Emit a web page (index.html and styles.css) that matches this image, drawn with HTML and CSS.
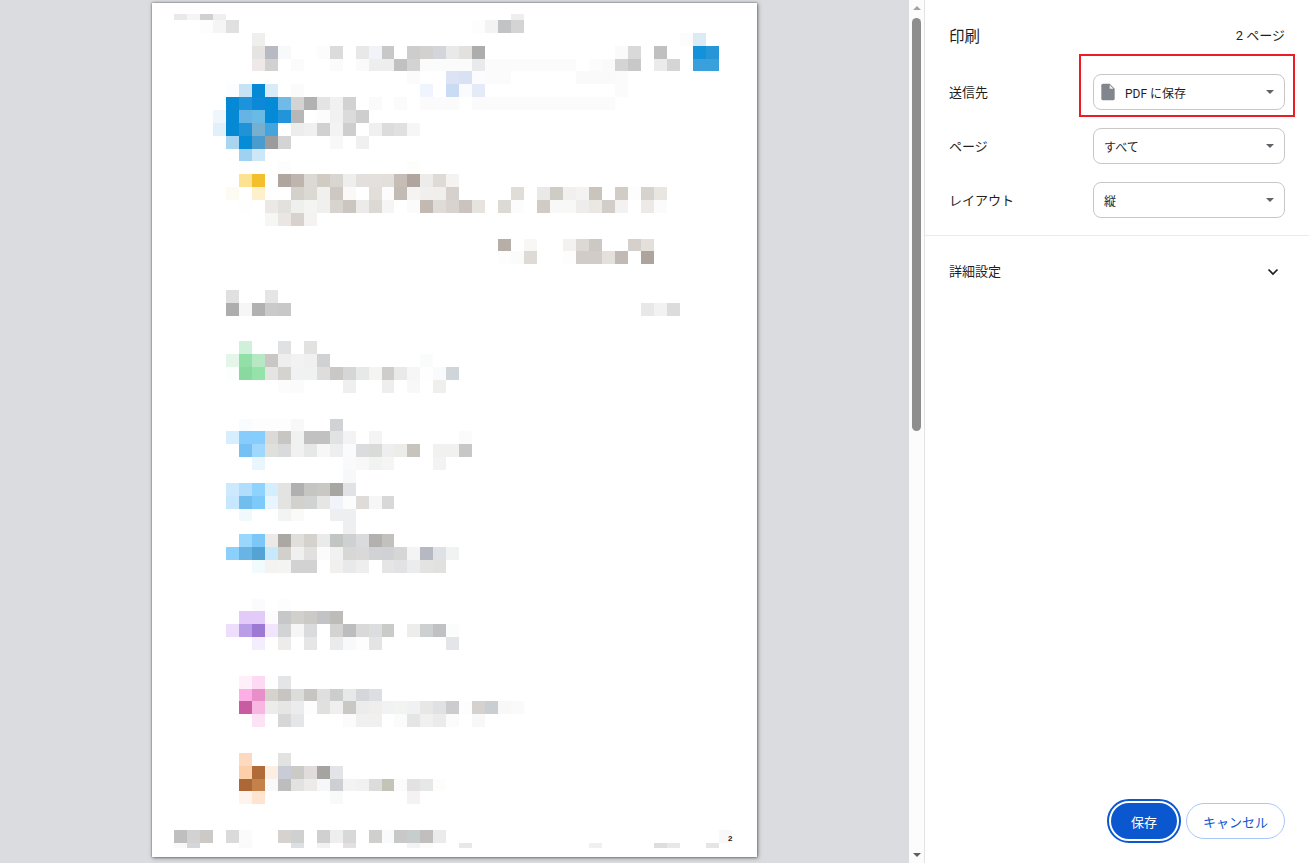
FILE: index.html
```html
<!DOCTYPE html>
<html lang="ja">
<head>
<meta charset="utf-8">
<title>印刷</title>
<link rel="stylesheet" href="styles.css">
</head>
<body>
<main class="preview">
<div class="sheet">
<svg class="mosaic" width="605" height="854" viewBox="0 0 605 854" aria-hidden="true">
<g transform="translate(22 17) scale(12.97 12.857)">
<g class="cap-top">
<rect x="0" y="-.467" fill="#e9e9e9"/><rect x="1" y="-.467" fill="#f5f5f6"/><rect x="2" y="-.467" fill="#d0d0d0"/><rect x="3" y="-.467" fill="#efefef"/><rect x="26" y="-.467" fill="#eee"/>
</g>
<g class="cells">
<rect x="2" y="0" fill="#fdfdfd"/><rect x="3" y="0" fill="#f5f5f5"/><rect x="4" y="0" fill="#e0e0e0"/><rect x="23" y="0" fill="#fdfdfd"/><rect x="24" y="0" fill="#f3f3f3"/><rect x="25" y="0" fill="#c2c3c5"/><rect x="26" y="0" fill="#d4d4d4"/>
<rect x="6" y="1" fill="#efefed"/><rect x="39" y="1" fill="#fcfcfc"/><rect x="40" y="1" fill="#daebf5"/>
<rect x="6" y="2" fill="#e5e4e2"/><rect x="7" y="2" fill="#b7bac3"/><rect x="8" y="2" fill="#f8f9fb"/><rect x="11" y="2" fill="#fbfcfb"/><rect x="12" y="2" fill="#dadbda"/><rect x="14" y="2" fill="#e8e8e9"/><rect x="15" y="2" fill="#f2f3f8"/><rect x="16" y="2" fill="#c8c8c8"/><rect x="18" y="2" fill="#cdcdcd"/><rect x="19" y="2" fill="#d2d1cf"/><rect x="20" y="2" fill="#d3d5db"/><rect x="21" y="2" fill="#e9e9e9"/><rect x="22" y="2" fill="#e2e1de"/><rect x="23" y="2" fill="#adadad"/><rect x="34" y="2" fill="#fafafa"/><rect x="35" y="2" fill="#d9d9d9"/><rect x="37" y="2" fill="#c0c0c0"/><rect x="40" y="2" fill="#1392d9"/><rect x="41" y="2" fill="#2796d9"/>
<rect x="6" y="3" fill="#eee9e8"/><rect x="7" y="3" fill="#d0d1d0"/><rect x="9" y="3" fill="#fbfbfb"/><rect x="12" y="3" fill="#fbfbfb"/><rect x="14" y="3" fill="#fafafa"/><rect x="15" y="3" fill="#eee"/><rect x="16" y="3" fill="#eee"/><rect x="17" y="3" fill="#c1c1c1"/><rect x="18" y="3" fill="#d3d3d3"/><rect x="19" y="3" fill="#fbfbfb"/><rect x="20" y="3" fill="#fbfbfb"/><rect x="21" y="3" fill="#fbfbfb"/><rect x="22" y="3" fill="#fbfbfb"/><rect x="23" y="3" fill="#e9eaec"/><rect x="24" y="3" fill="#fbfbfb"/><rect x="25" y="3" fill="#fbfbfb"/><rect x="26" y="3" fill="#fbfbfb"/><rect x="27" y="3" fill="#fbfbfb"/><rect x="28" y="3" fill="#fbfbfb"/><rect x="29" y="3" fill="#fbfbfb"/><rect x="30" y="3" fill="#fbfbfb"/><rect x="32" y="3" fill="#fcfcfc"/><rect x="33" y="3" fill="#fafafa"/><rect x="34" y="3" fill="#d4d4d4"/><rect x="35" y="3" fill="#c8c8c8"/><rect x="37" y="3" fill="#ebebeb"/><rect x="38" y="3" fill="#d5d5d5"/><rect x="40" y="3" fill="#3a9fda"/><rect x="41" y="3" fill="#38a0da"/>
<rect x="18" y="4" fill="#fbfbfd"/><rect x="21" y="4" fill="#dce3f5"/><rect x="22" y="4" fill="#d9e2f5"/><rect x="23" y="4" fill="#fcfcfe"/><rect x="24" y="4" fill="#fbfbfb"/><rect x="25" y="4" fill="#fbfbfb"/><rect x="31" y="4" fill="#fafafa"/><rect x="32" y="4" fill="#fafafa"/><rect x="33" y="4" fill="#fafafa"/><rect x="34" y="4" fill="#fbfbfb"/>
<rect x="4" y="5" fill="#fcfdfe"/><rect x="5" y="5" fill="#c6e2f3"/><rect x="6" y="5" fill="#0689d5"/><rect x="7" y="5" fill="#d8ebf6"/><rect x="9" y="5" fill="#fbfbfb"/><rect x="19" y="5" fill="#f0f4fd"/><rect x="21" y="5" fill="#c9dcf3"/><rect x="22" y="5" fill="#f9fbfe"/><rect x="23" y="5" fill="#e4eaf8"/><rect x="34" y="5" fill="#fbfbfb"/>
<rect x="4" y="6" fill="#0689d4"/><rect x="5" y="6" fill="#1c93da"/><rect x="6" y="6" fill="#0b89d8"/><rect x="7" y="6" fill="#048ad6"/><rect x="8" y="6" fill="#6fbae6"/><rect x="9" y="6" fill="#d3d3d3"/><rect x="10" y="6" fill="#b1b1b1"/><rect x="11" y="6" fill="#e4e4e4"/><rect x="12" y="6" fill="#f1f1f1"/><rect x="13" y="6" fill="#d2d2d2"/><rect x="15" y="6" fill="#fafafa"/><rect x="17" y="6" fill="#fbfbfb"/><rect x="19" y="6" fill="#fbfbfb"/><rect x="20" y="6" fill="#fbfbfb"/><rect x="21" y="6" fill="#fbfbfb"/><rect x="23" y="6" fill="#fbfbfb"/><rect x="24" y="6" fill="#fbfbfb"/><rect x="25" y="6" fill="#fbfbfb"/><rect x="26" y="6" fill="#fbfbfb"/><rect x="27" y="6" fill="#fbfbfb"/><rect x="28" y="6" fill="#fbfbfb"/><rect x="29" y="6" fill="#fbfbfb"/><rect x="30" y="6" fill="#fbfbfb"/><rect x="31" y="6" fill="#fbfbfb"/><rect x="32" y="6" fill="#fbfbfb"/><rect x="33" y="6" fill="#fbfbfb"/>
<rect x="3" y="7" fill="#eff7fc"/><rect x="4" y="7" fill="#0689d4"/><rect x="5" y="7" fill="#66b4e6"/><rect x="6" y="7" fill="#6abae6"/><rect x="7" y="7" fill="#048ad6"/><rect x="8" y="7" fill="#2295da"/><rect x="9" y="7" fill="#b7b7b7"/><rect x="11" y="7" fill="#fcfcfc"/><rect x="12" y="7" fill="#f1f1f1"/><rect x="13" y="7" fill="#dbdbdb"/><rect x="14" y="7" fill="#cecece"/>
<rect x="3" y="8" fill="#e2f1f9"/><rect x="4" y="8" fill="#0689d4"/><rect x="5" y="8" fill="#1f92d8"/><rect x="6" y="8" fill="#77afd1"/><rect x="7" y="8" fill="#44a5de"/><rect x="9" y="8" fill="#ededed"/><rect x="10" y="8" fill="#f0f0f0"/><rect x="11" y="8" fill="#d1d1d1"/><rect x="12" y="8" fill="#f3f3f3"/><rect x="13" y="8" fill="#cdcecd"/><rect x="15" y="8" fill="#f0f0f0"/><rect x="16" y="8" fill="#dcdcdc"/><rect x="17" y="8" fill="#e0e0e0"/><rect x="18" y="8" fill="#f6f6f6"/>
<rect x="4" y="9" fill="#a8d6f0"/><rect x="5" y="9" fill="#068bd6"/><rect x="6" y="9" fill="#4a9ccf"/><rect x="7" y="9" fill="#9b9b9b"/><rect x="8" y="9" fill="#d4d4d4"/><rect x="12" y="9" fill="#f8f8f8"/><rect x="14" y="9" fill="#f0f0f0"/>
<rect x="5" y="10" fill="#9fd1f0"/><rect x="6" y="10" fill="#cce7f7"/>
<rect x="5" y="11" fill="#fefefe"/><rect x="8" y="11" fill="#fdfdfd"/><rect x="18" y="11" fill="#fdfdfb"/>
<rect x="5" y="12" fill="#fce291"/><rect x="6" y="12" fill="#f3bf2c"/><rect x="8" y="12" fill="#afa69f"/><rect x="9" y="12" fill="#bdb5ae"/><rect x="10" y="12" fill="#dcd9d4"/><rect x="11" y="12" fill="#d0ccc4"/><rect x="12" y="12" fill="#d9d5d0"/><rect x="13" y="12" fill="#eeeeec"/><rect x="14" y="12" fill="#e3dfdc"/><rect x="15" y="12" fill="#e4e1dd"/><rect x="16" y="12" fill="#e3e0dc"/><rect x="17" y="12" fill="#c5bdb6"/><rect x="18" y="12" fill="#afa59e"/><rect x="19" y="12" fill="#edecea"/><rect x="20" y="12" fill="#dedbd7"/><rect x="21" y="12" fill="#f4f3f1"/>
<rect x="4" y="13" fill="#fefbf3"/><rect x="6" y="13" fill="#fdf0cb"/><rect x="9" y="13" fill="#d4d0ca"/><rect x="10" y="13" fill="#dbd9d2"/><rect x="11" y="13" fill="#f0f0ee"/><rect x="12" y="13" fill="#cdc8c2"/><rect x="13" y="13" fill="#faf9f7"/><rect x="15" y="13" fill="#e2dfdb"/><rect x="16" y="13" fill="#fcfcfc"/><rect x="17" y="13" fill="#c2bbb4"/><rect x="18" y="13" fill="#f5f4f2"/><rect x="19" y="13" fill="#f0efed"/><rect x="20" y="13" fill="#f0efed"/><rect x="21" y="13" fill="#d6d1cc"/><rect x="26" y="13" fill="#e0ddd9"/><rect x="28" y="13" fill="#eae9e7"/><rect x="29" y="13" fill="#cfcbc5"/><rect x="30" y="13" fill="#f1f0ee"/><rect x="31" y="13" fill="#f4f3f1"/><rect x="32" y="13" fill="#c9c5bd"/><rect x="34" y="13" fill="#d1ccc6"/><rect x="35" y="13" fill="#fdfdfd"/><rect x="36" y="13" fill="#d6d2cd"/><rect x="37" y="13" fill="#e9e6e2"/>
<rect x="5" y="14" fill="#fefefe"/><rect x="7" y="14" fill="#ece8e6"/><rect x="8" y="14" fill="#e3e1dd"/><rect x="9" y="14" fill="#efefed"/><rect x="10" y="14" fill="#f4f4f2"/><rect x="11" y="14" fill="#f0f0ee"/><rect x="12" y="14" fill="#d7d3cf"/><rect x="13" y="14" fill="#cbc6bf"/><rect x="14" y="14" fill="#ecebe9"/><rect x="15" y="14" fill="#dcd8d4"/><rect x="16" y="14" fill="#f6f4f4"/><rect x="18" y="14" fill="#fbfbfb"/><rect x="19" y="14" fill="#c2b9b3"/><rect x="20" y="14" fill="#dfdbd7"/><rect x="21" y="14" fill="#d8d3cf"/><rect x="22" y="14" fill="#cbc4be"/><rect x="23" y="14" fill="#e7e3df"/><rect x="25" y="14" fill="#ddd9d5"/><rect x="26" y="14" fill="#fcfcfd"/><rect x="28" y="14" fill="#d0cbc5"/><rect x="29" y="14" fill="#f8f8f6"/><rect x="30" y="14" fill="#f8f8f6"/><rect x="31" y="14" fill="#eeedeb"/><rect x="32" y="14" fill="#ebe7e3"/><rect x="33" y="14" fill="#d2cdc8"/><rect x="34" y="14" fill="#f3f2f0"/><rect x="36" y="14" fill="#ede9e7"/><rect x="37" y="14" fill="#fcfbfb"/>
<rect x="7" y="15" fill="#f6f6f4"/><rect x="8" y="15" fill="#e9e6e3"/><rect x="9" y="15" fill="#d7d2ce"/><rect x="10" y="15" fill="#f4f3f1"/>
<rect x="25" y="17" fill="#b8aea8"/><rect x="27" y="17" fill="#f9f7f5"/><rect x="30" y="17" fill="#f3f2f0"/><rect x="31" y="17" fill="#dcd8d4"/><rect x="32" y="17" fill="#ccc8c3"/><rect x="35" y="17" fill="#d5d0cc"/><rect x="36" y="17" fill="#e3dfdb"/>
<rect x="25" y="18" fill="#fdfdfd"/><rect x="26" y="18" fill="#fbfbfb"/><rect x="27" y="18" fill="#dedad6"/><rect x="30" y="18" fill="#fdfdfd"/><rect x="31" y="18" fill="#d1ccc7"/><rect x="32" y="18" fill="#d1ccc8"/><rect x="33" y="18" fill="#e4e0dc"/><rect x="34" y="18" fill="#c1b9b3"/><rect x="36" y="18" fill="#aea49e"/>
<rect x="4" y="21" fill="#e0e0e0"/><rect x="7" y="21" fill="#e5e5e5"/>
<rect x="4" y="22" fill="#adadad"/><rect x="5" y="22" fill="#f6f6f6"/><rect x="6" y="22" fill="#b1b1b1"/><rect x="7" y="22" fill="#cacaca"/><rect x="8" y="22" fill="#c8c8c8"/><rect x="36" y="22" fill="#e8e8e8"/><rect x="37" y="22" fill="#f2f2f2"/><rect x="38" y="22" fill="#dcdcdc"/>
<rect x="5" y="25" fill="#cff0da"/><rect x="8" y="25" fill="#e0e1e2"/><rect x="10" y="25" fill="#e2e2e0"/>
<rect x="4" y="26" fill="#e4f6ea"/><rect x="5" y="26" fill="#92dfa8"/><rect x="6" y="26" fill="#b6e8c3"/><rect x="7" y="26" fill="#c9c6c3"/><rect x="8" y="26" fill="#eee"/><rect x="9" y="26" fill="#f2f2f2"/><rect x="10" y="26" fill="#f0f0f0"/><rect x="11" y="26" fill="#d0d1d3"/><rect x="19" y="26" fill="#fafcfb"/>
<rect x="4" y="27" fill="#fbfefc"/><rect x="5" y="27" fill="#89d9a0"/><rect x="6" y="27" fill="#95e2ab"/><rect x="7" y="27" fill="#e4e4e2"/><rect x="8" y="27" fill="#d4d3d0"/><rect x="9" y="27" fill="#f0f1f2"/><rect x="10" y="27" fill="#f0f1f1"/><rect x="11" y="27" fill="#dedddb"/><rect x="12" y="27" fill="#c9c8c6"/><rect x="13" y="27" fill="#d5d6d5"/><rect x="14" y="27" fill="#e7e8e8"/><rect x="15" y="27" fill="#f4f4f3"/><rect x="16" y="27" fill="#cfcdcb"/><rect x="17" y="27" fill="#e9e9e9"/><rect x="18" y="27" fill="#f6f6f6"/><rect x="19" y="27" fill="#fefefe"/><rect x="20" y="27" fill="#f9fafb"/><rect x="21" y="27" fill="#d0d5d9"/>
<rect x="8" y="28" fill="#fbfcfb"/><rect x="9" y="28" fill="#fbfbfb"/><rect x="13" y="28" fill="#efefef"/><rect x="16" y="28" fill="#eee"/><rect x="18" y="28" fill="#f8f8f8"/><rect x="20" y="28" fill="#efefed"/>
<rect x="5" y="31" fill="#f9fcff"/><rect x="6" y="31" fill="#fdfdfd"/><rect x="7" y="31" fill="#fdfdfd"/><rect x="8" y="31" fill="#fdfdfd"/><rect x="9" y="31" fill="#f8f8f8"/><rect x="12" y="31" fill="#d1d2d6"/>
<rect x="4" y="32" fill="#d6eefd"/><rect x="5" y="32" fill="#88cbfd"/><rect x="6" y="32" fill="#85cdfd"/><rect x="7" y="32" fill="#dbdad8"/><rect x="8" y="32" fill="#c8c6c3"/><rect x="9" y="32" fill="#f0f2f1"/><rect x="10" y="32" fill="#c1c1c1"/><rect x="11" y="32" fill="#c1c1c1"/><rect x="12" y="32" fill="#e1e2e4"/><rect x="13" y="32" fill="#f3f3f3"/><rect x="15" y="32" fill="#f4f4f4"/><rect x="22" y="32" fill="#fbfbfb"/>
<rect x="5" y="33" fill="#75c1f4"/><rect x="6" y="33" fill="#9fd7fd"/><rect x="7" y="33" fill="#dfdfdb"/><rect x="8" y="33" fill="#d9dadc"/><rect x="9" y="33" fill="#f1f1f1"/><rect x="10" y="33" fill="#e6e8e8"/><rect x="11" y="33" fill="#f7f7f7"/><rect x="12" y="33" fill="#edefef"/><rect x="13" y="33" fill="#f9fbfd"/><rect x="14" y="33" fill="#dbdcde"/><rect x="15" y="33" fill="#dadad8"/><rect x="16" y="33" fill="#eee"/><rect x="17" y="33" fill="#ecece9"/><rect x="18" y="33" fill="#c6c4bc"/><rect x="20" y="33" fill="#f1f1ef"/><rect x="21" y="33" fill="#f1f1ef"/><rect x="22" y="33" fill="#c7c7c7"/>
<rect x="6" y="34" fill="#e9f6fd"/><rect x="13" y="34" fill="#fafafa"/><rect x="14" y="34" fill="#f8f8f8"/><rect x="15" y="34" fill="#f1f3f3"/><rect x="16" y="34" fill="#f5f5f3"/><rect x="20" y="34" fill="#f3f3f3"/>
<rect x="13" y="35" fill="#f7f8fa"/>
<rect x="4" y="36" fill="#cce9fd"/><rect x="5" y="36" fill="#b2defd"/><rect x="6" y="36" fill="#8ed3fd"/><rect x="7" y="36" fill="#d5eefd"/><rect x="8" y="36" fill="#e3e3e1"/><rect x="9" y="36" fill="#b0b0b0"/><rect x="10" y="36" fill="#c5c5c4"/><rect x="11" y="36" fill="#c9c8c3"/><rect x="12" y="36" fill="#a7a6a3"/><rect x="13" y="36" fill="#e1e2e5"/>
<rect x="4" y="37" fill="#c6e7fd"/><rect x="5" y="37" fill="#70bdee"/><rect x="6" y="37" fill="#7ccafa"/><rect x="7" y="37" fill="#e8f5fe"/><rect x="8" y="37" fill="#e3e3e1"/><rect x="9" y="37" fill="#d2d1ce"/><rect x="10" y="37" fill="#d1d3d2"/><rect x="11" y="37" fill="#e6e6e4"/><rect x="12" y="37" fill="#f1f4fa"/><rect x="13" y="37" fill="#fcfcfd"/><rect x="14" y="37" fill="#dfdbd8"/><rect x="15" y="37" fill="#f6f6f6"/><rect x="16" y="37" fill="#d8d8d8"/>
<rect x="5" y="38" fill="#f2f9fd"/><rect x="8" y="38" fill="#f2f3f3"/><rect x="9" y="38" fill="#fafaf9"/><rect x="12" y="38" fill="#eeeff0"/><rect x="13" y="38" fill="#eeeff0"/>
<rect x="13" y="39" fill="#eeeff1"/>
<rect x="5" y="40" fill="#9ad7fd"/><rect x="6" y="40" fill="#7bc8f8"/><rect x="7" y="40" fill="#ebeae8"/><rect x="8" y="40" fill="#aba8a3"/><rect x="9" y="40" fill="#e0dfdc"/><rect x="10" y="40" fill="#d5d2cd"/><rect x="11" y="40" fill="#ebeaea"/><rect x="12" y="40" fill="#c2c6c2"/><rect x="13" y="40" fill="#cfd0d1"/><rect x="14" y="40" fill="#dadbdd"/><rect x="15" y="40" fill="#b3b0b0"/><rect x="16" y="40" fill="#c3c1be"/>
<rect x="4" y="41" fill="#8ad0fa"/><rect x="5" y="41" fill="#69b4e5"/><rect x="6" y="41" fill="#54a3d5"/><rect x="7" y="41" fill="#c8e8fc"/><rect x="8" y="41" fill="#d1d0cb"/><rect x="9" y="41" fill="#f0f0f0"/><rect x="10" y="41" fill="#e1e0de"/><rect x="11" y="41" fill="#fbfbfb"/><rect x="12" y="41" fill="#f1f1f1"/><rect x="13" y="41" fill="#d7d7d6"/><rect x="14" y="41" fill="#d9d9d9"/><rect x="15" y="41" fill="#d0d2d4"/><rect x="16" y="41" fill="#d0d1d5"/><rect x="17" y="41" fill="#d6d6d6"/><rect x="18" y="41" fill="#f4f4f4"/><rect x="19" y="41" fill="#b6b9c3"/><rect x="20" y="41" fill="#dfe2e5"/><rect x="21" y="41" fill="#f1f3f2"/>
<rect x="6" y="42" fill="#f1fafd"/><rect x="7" y="42" fill="#f4f3f1"/><rect x="8" y="42" fill="#f4f4f2"/><rect x="9" y="42" fill="#d2d2d3"/><rect x="10" y="42" fill="#d2d2d3"/><rect x="12" y="42" fill="#f1f0ef"/><rect x="13" y="42" fill="#e8e9eb"/><rect x="14" y="42" fill="#eeeeef"/><rect x="16" y="42" fill="#e5e5e5"/><rect x="17" y="42" fill="#e2e2e4"/><rect x="18" y="42" fill="#ebecee"/><rect x="19" y="42" fill="#e3e3e2"/><rect x="20" y="42" fill="#e1e1df"/>
<rect x="6" y="45" fill="#fbfbfe"/><rect x="8" y="45" fill="#fdfdfd"/>
<rect x="5" y="46" fill="#e2cbf8"/><rect x="6" y="46" fill="#e2cbf8"/><rect x="7" y="46" fill="#fdfbfe"/><rect x="8" y="46" fill="#c6c7c8"/><rect x="9" y="46" fill="#d1d0cc"/><rect x="10" y="46" fill="#cbcac7"/><rect x="11" y="46" fill="#c2c3c4"/><rect x="12" y="46" fill="#bdbcb9"/>
<rect x="4" y="47" fill="#eeddfb"/><rect x="5" y="47" fill="#b99de6"/><rect x="6" y="47" fill="#9d79d3"/><rect x="7" y="47" fill="#f1e4fd"/><rect x="8" y="47" fill="#d2d3d4"/><rect x="9" y="47" fill="#f6f6f6"/><rect x="10" y="47" fill="#dadbdc"/><rect x="12" y="47" fill="#d4d3d1"/><rect x="13" y="47" fill="#bcbdbe"/><rect x="14" y="47" fill="#d8d9d8"/><rect x="15" y="47" fill="#dcdddf"/><rect x="16" y="47" fill="#c9cbc9"/><rect x="18" y="47" fill="#ededeb"/><rect x="19" y="47" fill="#ccd0d0"/><rect x="20" y="47" fill="#c0c1c4"/><rect x="21" y="47" fill="#fbfdfc"/>
<rect x="6" y="48" fill="#f3edfd"/><rect x="8" y="48" fill="#edecea"/><rect x="10" y="48" fill="#e5e6e5"/><rect x="12" y="48" fill="#eaebed"/><rect x="13" y="48" fill="#f9f9f9"/><rect x="14" y="48" fill="#fdfdfd"/><rect x="15" y="48" fill="#e4e4e4"/><rect x="21" y="48" fill="#e4e5e8"/>
<rect x="5" y="51" fill="#feeff9"/><rect x="6" y="51" fill="#fed9f3"/><rect x="8" y="51" fill="#e4e5e7"/>
<rect x="5" y="52" fill="#feaee6"/><rect x="6" y="52" fill="#e88ec8"/><rect x="7" y="52" fill="#d6d2ce"/><rect x="8" y="52" fill="#c8c4c2"/><rect x="9" y="52" fill="#dcdcdb"/><rect x="10" y="52" fill="#c6c5c2"/><rect x="11" y="52" fill="#dfdfdf"/><rect x="12" y="52" fill="#cdcdcd"/><rect x="13" y="52" fill="#e7e8ea"/><rect x="14" y="52" fill="#d5d6da"/><rect x="15" y="52" fill="#dcdee3"/>
<rect x="5" y="53" fill="#c95ca0"/><rect x="6" y="53" fill="#f8b6e3"/><rect x="7" y="53" fill="#edecea"/><rect x="8" y="53" fill="#e6e6e4"/><rect x="9" y="53" fill="#ebecee"/><rect x="10" y="53" fill="#fdfdfd"/><rect x="11" y="53" fill="#e0e0de"/><rect x="12" y="53" fill="#efefef"/><rect x="13" y="53" fill="#c9c8c5"/><rect x="14" y="53" fill="#ececec"/><rect x="15" y="53" fill="#efeeec"/><rect x="16" y="53" fill="#f1f2f4"/><rect x="17" y="53" fill="#f3f3f1"/><rect x="18" y="53" fill="#f0f1f3"/><rect x="19" y="53" fill="#e7e7e5"/><rect x="20" y="53" fill="#e0e1e3"/><rect x="21" y="53" fill="#ccccce"/><rect x="22" y="53" fill="#fdfdfd"/><rect x="23" y="53" fill="#d5d1cf"/><rect x="24" y="53" fill="#c9ced2"/><rect x="25" y="53" fill="#f8f8f8"/><rect x="26" y="53" fill="#fafafa"/>
<rect x="6" y="54" fill="#fde2f6"/><rect x="8" y="54" fill="#d7d7d7"/><rect x="9" y="54" fill="#e5e6e8"/><rect x="13" y="54" fill="#fbfbfb"/><rect x="14" y="54" fill="#f0f0f0"/><rect x="15" y="54" fill="#f0f0f0"/><rect x="17" y="54" fill="#fbfbfb"/><rect x="18" y="54" fill="#e5e5e5"/><rect x="19" y="54" fill="#f0f0f0"/><rect x="20" y="54" fill="#ebebeb"/><rect x="21" y="54" fill="#fbfbfb"/><rect x="23" y="54" fill="#f8f8f8"/>
<rect x="5" y="57" fill="#fdd9c0"/><rect x="8" y="57" fill="#e2e2e1"/>
<rect x="5" y="58" fill="#fdcfa9"/><rect x="6" y="58" fill="#b06b38"/><rect x="7" y="58" fill="#fdeee3"/><rect x="8" y="58" fill="#c9cbd6"/><rect x="9" y="58" fill="#cccac7"/><rect x="10" y="58" fill="#e0dcdb"/><rect x="11" y="58" fill="#a5a4a1"/><rect x="12" y="58" fill="#e3e4e8"/>
<rect x="5" y="59" fill="#ab6735"/><rect x="6" y="59" fill="#c4814a"/><rect x="7" y="59" fill="#f9f9f9"/><rect x="8" y="59" fill="#bdbdbd"/><rect x="9" y="59" fill="#e2e3e1"/><rect x="10" y="59" fill="#edebe9"/><rect x="11" y="59" fill="#f6f7f9"/><rect x="12" y="59" fill="#cecfd2"/><rect x="13" y="59" fill="#f2f3f2"/><rect x="14" y="59" fill="#f1f1f1"/><rect x="15" y="59" fill="#dbdcdb"/><rect x="16" y="59" fill="#c3c3b8"/><rect x="17" y="59" fill="#fbfbfb"/><rect x="18" y="59" fill="#e3e1e2"/><rect x="19" y="59" fill="#e6e8e7"/><rect x="20" y="59" fill="#fdfdfb"/>
<rect x="5" y="60" fill="#fef4ed"/><rect x="6" y="60" fill="#fee4d1"/><rect x="12" y="60" fill="#f8fafa"/><rect x="18" y="60" fill="#f4f2f3"/>
<rect x="0" y="63" fill="#bfbfbf"/><rect x="1" y="63" fill="#d2d2d3"/><rect x="2" y="63" fill="#cdc9c6"/><rect x="4" y="63" fill="#dadada"/><rect x="5" y="63" fill="#fbfbfb"/><rect x="8" y="63" fill="#d6d2cf"/><rect x="9" y="63" fill="#cfd0d0"/><rect x="11" y="63" fill="#d0d0d0"/><rect x="12" y="63" fill="#eee"/><rect x="13" y="63" fill="#d8d8d8"/><rect x="15" y="63" fill="#cfcfcd"/><rect x="16" y="63" fill="#f9fafc"/><rect x="17" y="63" fill="#c8c8c8"/><rect x="18" y="63" fill="#c7cdcd"/><rect x="19" y="63" fill="#c0bfbd"/><rect x="20" y="63" fill="#ebebeb"/><rect x="42" y="63" fill="#f8f8f8"/>
</g>
<g class="cap-bottom">
<rect x="0" y="64" fill="#f9f9f9"/><rect x="1" y="64" fill="#d3d7db"/><rect x="5" y="64" fill="#fafafa"/><rect x="9" y="64" fill="#dde0e3"/><rect x="11" y="64" fill="#f2f2f2"/><rect x="13" y="64" fill="#e4e0df"/><rect x="18" y="64" fill="#f3f3f3"/><rect x="19" y="64" fill="#fbfbfb"/><rect x="22" y="64" fill="#e7e8e8"/><rect x="32" y="64" fill="#f0f0f0"/><rect x="37" y="64" fill="#dedede"/><rect x="38" y="64" fill="#e8e8e8"/><rect x="41" y="64" fill="#e5e5e5"/>
</g>
</g>
</svg>
<span class="page-no">2</span>
</div>
</main>
<div class="scrollbar">
<span class="arrow-up"></span>
<div class="track"><div class="thumb"></div></div>
<span class="arrow-down"></span>
</div>
<aside class="panel">
<header class="head">
<h1 class="title">印刷</h1>
<span class="count">2 ページ</span>
</header>
<div class="rows">
<div class="row">
<span class="label">送信先</span>
<div class="select">
<svg class="doc" width="20" height="20" viewBox="0 0 24 24" aria-hidden="true"><path d="M14 2H6a2 2 0 0 0-2 2v16a2 2 0 0 0 2 2h12a2 2 0 0 0 2-2V8z"/><path class="fold" d="M14 3.5V8h4.5z"/></svg>
<span class="value">PDF に保存</span>
<i class="caret"></i>
</div>
</div>
<div class="row">
<span class="label">ページ</span>
<div class="select"><span>すべて</span><i class="caret"></i></div>
</div>
<div class="row">
<span class="label">レイアウト</span>
<div class="select"><span>縦</span><i class="caret"></i></div>
</div>
</div>
<div class="more">
<span class="label">詳細設定</span>
<svg class="chev" width="12" height="8" viewBox="0 0 12 8" aria-hidden="true"><path d="M1.5 1.5 6 6l4.5-4.5"/></svg>
</div>
<footer class="actions">
<button class="btn primary" type="button">保存</button>
<button class="btn ghost" type="button">キャンセル</button>
</footer>
<div class="callout"></div>
</aside>
</body>
</html>
```

FILE: styles.css
```css
* { box-sizing: border-box; }
html, body { height: 100%; }
body {
  margin: 0;
  height: 863px;
  display: flex;
  overflow: hidden;
  background: #fff;
  color: #1f1f1f;
  font-family: Roboto, "Noto Sans CJK JP", sans-serif;
  font-size: 13px;
}
.preview {
  width: 909px;
  flex: none;
  background: #dbdcdf;
  display: flex;
  justify-content: center;
  padding-top: 3px;
}
.sheet {
  position: relative;
  width: 605px;
  height: 854px;
  background: #fff;
  box-shadow: 0 0 2px rgba(60, 64, 67, .75), 1px 1px 4px rgba(60, 64, 67, .55);
}
.mosaic { display: block; shape-rendering: crispEdges; }
.cells rect, .cap-top rect { width: 1px; height: 1px; }
.cap-top rect { height: .467px; }
.cap-bottom rect { width: 1px; height: .39px; }
.page-no {
  position: absolute;
  left: 576px;
  top: 831px;
  font: 700 8px/10px "Liberation Sans", sans-serif;
  color: #222;
}
.scrollbar {
  width: 16px;
  flex: none;
  background: #fcfcfc;
  border-right: 1px solid #e3e3e3;
  display: flex;
  flex-direction: column;
  align-items: center;
}
.arrow-up, .arrow-down {
  width: 0;
  height: 0;
  flex: none;
  border-left: 4px solid transparent;
  border-right: 4px solid transparent;
}
.arrow-up { margin-top: 6px; border-bottom: 4px solid #a3a3a3; }
.arrow-down { margin-bottom: 6px; border-top: 4px solid #5f5f5f; }
.track { flex: 1; padding-top: 8px; width: 100%; display: flex; justify-content: center; }
.thumb { width: 9px; height: 413px; background: #8e8e8e; border-radius: 5px; }
.panel {
  position: relative;
  flex: 1;
  display: flex;
  flex-direction: column;
}
.head {
  height: 74px;
  padding: 27px 24px 0;
  display: flex;
  justify-content: space-between;
  align-items: flex-start;
}
.title { margin: 0; font-size: 15.5px; font-weight: 400; line-height: 20px; }
.count { font-size: 13px; line-height: 18px; }
.rows {
  display: flex;
  flex-direction: column;
  gap: 18px;
  padding: 0 24px 17px;
  border-bottom: 1px solid #e8eaed;
}
.row { display: flex; align-items: center; justify-content: space-between; }
.label { line-height: 18px; }
.row .label { padding-top: 2px; }
.select {
  position: relative;
  width: 192px;
  height: 36px;
  padding: 0 10px;
  display: flex;
  align-items: center;
  border: 1px solid #c7c7c7;
  border-radius: 8px;
  font-size: 12px;
}
.doc { margin: 0 7px 0 -6px; fill: #80868b; }
.fold { fill: #f1f3f4; }
.caret {
  position: absolute;
  right: 10px;
  top: 15px;
  width: 0;
  height: 0;
  border-left: 4px solid transparent;
  border-right: 4px solid transparent;
  border-top: 4px solid #5f6368;
}
.more {
  height: 71px;
  padding: 0 30px 0 24px;
  display: flex;
  align-items: center;
  justify-content: space-between;
}
.chev { fill: none; stroke: #1f1f1f; stroke-width: 1.7; }
.actions {
  margin-top: auto;
  padding: 0 24px 24px;
  display: flex;
  justify-content: flex-end;
  align-items: center;
  gap: 9px;
}
.btn {
  height: 36px;
  border-radius: 18px;
  font: inherit;
  padding: 0;
}
.primary {
  width: 66px;
  border: 0;
  background: #0b57d0;
  color: #fff;
  outline: 2px solid #0b57d0;
  outline-offset: 2px;
}
.ghost {
  width: 99px;
  border: 1px solid #a8c7fa;
  background: #fff;
  color: #0b57d0;
}
.callout {
  position: absolute;
  left: 154px;
  top: 54px;
  width: 216px;
  height: 63px;
  border: 2px solid #ed1c24;
}
```
